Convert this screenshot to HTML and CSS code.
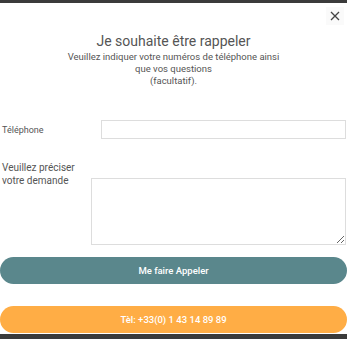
FILE: index.html
```html
<!DOCTYPE html>
<html lang="fr">
<head>
    <meta charset="UTF-8">
    <meta name="viewport" content="width=device-width, initial-scale=1.0">
    <title>Je souhaite être rappeler</title>
    <link rel="stylesheet" href="styles.css">
</head>
<body>
    <div class="modal">
        <button class="close" aria-label="Fermer">
            <svg width="10" height="10" viewBox="0 0 10 10"><path d="M1 1L9 9M9 1L1 9" stroke="#444" stroke-width="1.3" fill="none"/></svg>
        </button>
        <div class="header">
            <h2>Je souhaite être rappeler</h2>
            <p>Veuillez indiquer votre numéros de téléphone ainsi<br>que vos questions<br>(facultatif).</p>
        </div>
        <div class="row row-phone">
            <label for="phone">Téléphone</label>
            <input type="text" id="phone">
        </div>
        <div class="row row-message">
            <label for="message">Veuillez préciser<br>votre demande</label>
            <textarea id="message"></textarea>
        </div>
        <button class="btn btn-call">Me faire Appeler</button>
        <button class="btn btn-tel">Tèl: +33(0) 1 43 14 89 89</button>
    </div>
</body>
</html>
```

FILE: styles.css
```css
body {
    margin: 0;
    background-color: #3b3b3b;
    font-family: Roboto, "Liberation Sans", Arial, sans-serif;
    overflow: hidden;
}
.modal {
    position: relative;
    margin-top: 3px;
    height: 331px;
    background-color: #fff;
    display: flex;
    flex-direction: column;
}
.close {
    position: absolute;
    top: 4px;
    right: 3px;
    width: 18px;
    height: 18px;
    padding: 0;
    border: none;
    background: #fafafa;
    display: flex;
    align-items: center;
    justify-content: center;
}
.header {
    text-align: center;
    padding-top: 29px;
    color: #555;
}
.header h2 {
    margin: 0;
    font-size: 14px;
    font-weight: normal;
    line-height: 19px;
}
.header p {
    margin: 0;
    font-size: 9.5px;
    line-height: 12px;
}
.row {
    display: flex;
    color: #555;
}
.row label {
    padding-left: 2px;
    font-size: 9px;
}
.row-phone {
    margin-top: 33px;
    align-items: center;
}
.row-phone label {
    width: 99px;
}
.row-phone input {
    flex: 1;
    height: 19px;
    margin-right: 1px;
    padding: 0;
    border: 1px solid #ddd;
    box-sizing: border-box;
}
.row-message {
    margin-top: 22px;
}
.row-message label {
    width: 89px;
    font-size: 10px;
    line-height: 13px;
}
.row-message textarea {
    flex: 1;
    height: 67px;
    margin-top: 17px;
    margin-right: 1px;
    padding: 0;
    border: 1px solid #ddd;
    box-sizing: border-box;
}
.btn {
    width: 100%;
    height: 27px;
    border: none;
    border-radius: 14px;
    color: #fff;
    font-family: Roboto, "Liberation Sans", Arial, sans-serif;
    font-size: 9.5px;
    font-weight: 500;
}
.btn-call {
    margin-top: 12px;
    background-color: #5a878c;
}
.btn-tel {
    margin-top: 22px;
    background-color: #ffad45;
}
```
